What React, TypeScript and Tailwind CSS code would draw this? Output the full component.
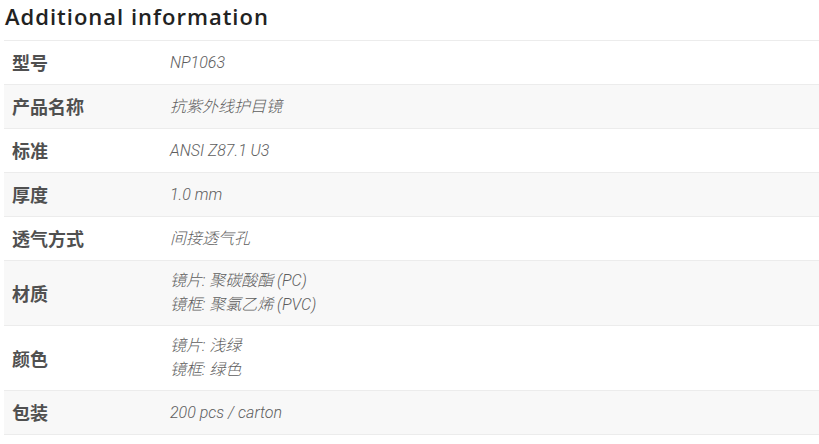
const rows: { label: string; values: string[] }[] = [
  { label: "型号", values: ["NP1063"] },
  { label: "产品名称", values: ["抗紫外线护目镜"] },
  { label: "标准", values: ["ANSI Z87.1 U3"] },
  { label: "厚度", values: ["1.0 mm"] },
  { label: "透气方式", values: ["间接透气孔"] },
  { label: "材质", values: ["镜片: 聚碳酸酯 (PC)", "镜框: 聚氯乙烯 (PVC)"] },
  { label: "颜色", values: ["镜片: 浅绿", "镜框: 绿色"] },
  { label: "包装", values: ["200 pcs / carton"] },
];

export default function App() {
  return (
    <div className="w-[819px] h-[444px] bg-white overflow-hidden pl-1">
      <h2 className="pl-px pt-px h-[40px] text-[22px] leading-[30px] font-semibold text-[#222] tracking-[1px] [font-family:'Open_Sans','Noto_Sans_CJK_SC',sans-serif]">
        Additional information
      </h2>
      <table className="w-full border-collapse border-t border-[#ececec]">
        <tbody>
          {rows.map((row, i) => (
            <tr
              key={row.label}
              className={`border-b border-[#ececec] ${i % 2 === 1 ? "bg-[#f8f8f8]" : "bg-white"}`}
            >
              <th className="w-[166px] pl-2 py-2 text-left align-middle text-[18px] leading-[27px] font-bold text-[#505050] [font-family:'Noto_Sans_CJK_SC','Noto_Sans',sans-serif]">
                {row.label}
              </th>
              <td className="py-2 align-middle text-[16px] leading-[24px] italic font-light text-[#5e5e5e] [font-family:Roboto,'Noto_Sans_CJK_SC',sans-serif]">
                {row.values.map((v) => (
                  <div key={v}>{v}</div>
                ))}
              </td>
            </tr>
          ))}
        </tbody>
      </table>
    </div>
  );
}
